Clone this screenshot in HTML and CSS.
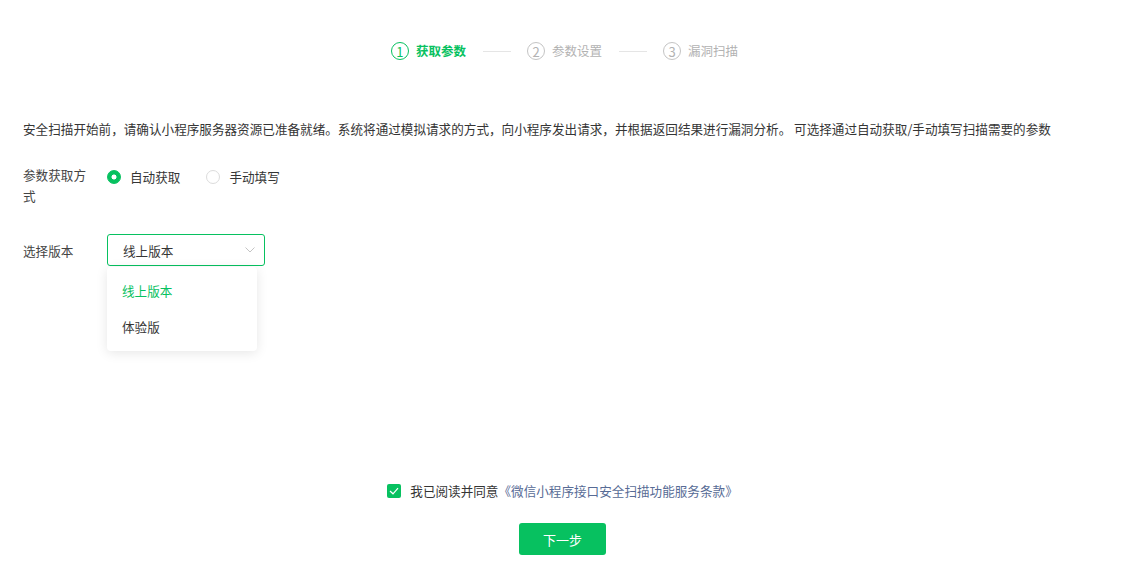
FILE: index.html
```html
<!DOCTYPE html>
<html lang="zh-CN">
<head>
    <meta charset="UTF-8">
    <title>漏洞扫描 - 获取参数</title>
    <link rel="stylesheet" href="styles.css">
</head>
<body>
    <div class="page">
        <div class="steps">
            <div class="step active">
                <span class="step-num">1</span>
                <span class="step-title">获取参数</span>
            </div>
            <span class="step-line"></span>
            <div class="step">
                <span class="step-num">2</span>
                <span class="step-title">参数设置</span>
            </div>
            <span class="step-line"></span>
            <div class="step">
                <span class="step-num">3</span>
                <span class="step-title">漏洞扫描</span>
            </div>
        </div>

        <p class="desc">安全扫描开始前，请确认小程序服务器资源已准备就绪。系统将通过模拟请求的方式，向小程序发出请求，并根据返回结果进行漏洞分析。 可选择通过自动获取/手动填写扫描需要的参数</p>

        <div class="form">
            <div class="form-row">
                <label class="form-label">参数获取方式</label>
                <div class="form-ctrl radios">
                    <span class="radio checked"><i></i>自动获取</span>
                    <span class="radio"><i></i>手动填写</span>
                </div>
            </div>
            <div class="form-row row-select">
                <label class="form-label">选择版本</label>
                <div class="form-ctrl">
                    <div class="select">
                        <div class="select-box">
                            <span>线上版本</span>
                            <svg class="arrow" width="10" height="6" viewBox="0 0 10 6"><path d="M0.5 0.5 L5 5 L9.5 0.5" fill="none" stroke="#c4c4c4" stroke-width="1"/></svg>
                        </div>
                        <ul class="select-menu">
                            <li class="selected">线上版本</li>
                            <li>体验版</li>
                        </ul>
                    </div>
                </div>
            </div>
        </div>

        <div class="footer">
            <div class="agree">
                <span class="checkbox">
                    <svg width="10" height="8" viewBox="0 0 10 8"><path d="M1 4 L4 6.8 L9 1.2" fill="none" stroke="#fff" stroke-width="1.2"/></svg>
                </span>
                我已阅读并同意<a class="link" href="#">《微信小程序接口安全扫描功能服务条款》</a>
            </div>
            <button class="button">下一步</button>
        </div>
    </div>
</body>
</html>
```

FILE: styles.css
```css
body {
    margin: 0;
    font-family: "Noto Sans CJK SC", "Noto Sans", sans-serif;
    font-size: 12.6px;
    color: #353535;
    background-color: #fff;
}
.page {
    padding: 42px 23px 0;
}
.steps {
    display: flex;
    justify-content: center;
    align-items: center;
    height: 18px;
    padding-left: 4px;
}
.step {
    display: flex;
    align-items: center;
    color: #b2b2b2;
}
.step-num {
    width: 16px;
    height: 16px;
    border: 1px solid #c4c4c4;
    border-radius: 50%;
    display: flex;
    align-items: center;
    justify-content: center;
    font-size: 13px;
    margin-right: 7px;
}
.step-title {
    font-size: 12.5px;
    line-height: 18px;
}
.step.active {
    color: #07c160;
}
.step.active .step-num {
    border-color: #07c160;
}
.step.active .step-title {
    font-weight: bold;
}
.step-line {
    width: 28px;
    height: 1px;
    background-color: #e5e5e5;
    margin: 0 16px 0 17px;
}
.desc {
    margin: 59px 0 0;
    line-height: 20px;
}
.form {
    margin-top: 25px;
}
.form-row {
    display: flex;
    align-items: flex-start;
}
.form-label {
    width: 66px;
    line-height: 21px;
    margin-right: 18px;
    color: #444;
}
.radios {
    display: flex;
    padding-top: 3px;
}
.radio {
    display: flex;
    align-items: center;
    line-height: 20px;
    margin-right: 26px;
}
.radio i {
    width: 12px;
    height: 12px;
    border: 1px solid #dcdcdc;
    border-radius: 50%;
    margin-right: 9px;
}
.radio.checked i {
    border: 1px solid #07c160;
    background: radial-gradient(circle, #fff 0, #fff 2.2px, #07c160 2.8px);
}
.row-select {
    margin-top: 28px;
    align-items: center;
}
.select {
    position: relative;
}
.select-box {
    width: 132px;
    height: 30px;
    border: 1px solid #07c160;
    border-radius: 3px;
    display: flex;
    align-items: center;
    justify-content: space-between;
    padding: 0 9px 0 15px;
}
.arrow {
    display: block;
}
.select-menu {
    position: absolute;
    top: 33px;
    left: 0;
    width: 150px;
    margin: 0;
    padding: 6px 0;
    list-style: none;
    background-color: #fff;
    border-radius: 4px;
    box-shadow: 0 2px 12px rgba(0,0,0,0.1);
}
.select-menu li {
    height: 36px;
    line-height: 36px;
    padding-left: 15px;
}
.select-menu li.selected {
    color: #07c160;
}
.footer {
    margin-top: 215px;
    display: flex;
    flex-direction: column;
    align-items: center;
}
.agree {
    display: flex;
    align-items: center;
    line-height: 20px;
}
.checkbox {
    width: 14px;
    height: 14px;
    border-radius: 2px;
    background-color: #07c160;
    display: flex;
    align-items: center;
    justify-content: center;
    margin-right: 9px;
}
.link {
    color: #576b95;
    text-decoration: none;
}
.button {
    margin-top: 22px;
    width: 87px;
    height: 32px;
    border: none;
    border-radius: 3px;
    background-color: #07c160;
    color: #fff;
    font-family: inherit;
    font-size: 13px;
    cursor: pointer;
}
```
